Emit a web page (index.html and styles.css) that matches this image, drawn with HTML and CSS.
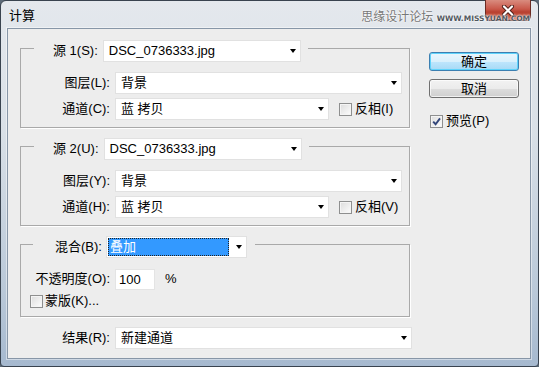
FILE: index.html
```html
<!DOCTYPE html>
<html lang="zh-CN">
<head>
    <meta charset="UTF-8">
    <title>计算</title>
    <link rel="stylesheet" href="styles.css">
</head>
<body>
    <div class="window">
        <div class="titlebar">
            <span class="title">计算</span>
            <span class="close">
                <svg width="16" height="11" viewBox="0 0 16 11"><path d="M4 1.5 L12 9.5 M12 1.5 L4 9.5" stroke="#4a1c16" stroke-width="4" stroke-linecap="round"/><path d="M4 1.5 L12 9.5 M12 1.5 L4 9.5" stroke="#fff" stroke-width="2.2" stroke-linecap="round"/></svg>
            </span>
            <span class="watermark">思缘设计论坛 <b>WWW.MISSYUAN.COM</b></span>
        </div>
        <div class="client">
            <div class="main">
                <fieldset class="group">
                    <legend class="legend">
                        <div class="head">
                            <span class="head-label">源 1(S):</span>
                            <div class="select select-src"><span>DSC_0736333.jpg</span><i class="arrow"></i></div>
                        </div>
                    </legend>
                    <div class="rows">
                        <div class="row">
                            <span class="lbl">图层(L):</span>
                            <div class="select select-wide"><span>背景</span><i class="arrow"></i></div>
                        </div>
                        <div class="row">
                            <span class="lbl">通道(C):</span>
                            <div class="select select-channel"><span>蓝 拷贝</span><i class="arrow"></i></div>
                            <span class="check"></span>
                            <span>反相(I)</span>
                        </div>
                    </div>
                </fieldset>

                <fieldset class="group">
                    <legend class="legend">
                        <div class="head">
                            <span class="head-label">源 2(U):</span>
                            <div class="select select-src"><span>DSC_0736333.jpg</span><i class="arrow"></i></div>
                        </div>
                    </legend>
                    <div class="rows">
                        <div class="row">
                            <span class="lbl">图层(Y):</span>
                            <div class="select select-wide"><span>背景</span><i class="arrow"></i></div>
                        </div>
                        <div class="row">
                            <span class="lbl">通道(H):</span>
                            <div class="select select-channel"><span>蓝 拷贝</span><i class="arrow"></i></div>
                            <span class="check"></span>
                            <span>反相(V)</span>
                        </div>
                    </div>
                </fieldset>

                <fieldset class="group">
                    <legend class="legend legend-blend">
                        <div class="head">
                            <span class="head-label">混合(B):</span>
                            <div class="select select-blend"><span class="picked">叠加</span><i class="arrow"></i></div>
                        </div>
                    </legend>
                    <div class="rows">
                        <div class="row">
                            <span class="lbl">不透明度(O):</span>
                            <div class="field">100</div>
                            <span class="unit">%</span>
                        </div>
                        <div class="row row-mask">
                            <span class="check"></span>
                            <span>蒙版(K)...</span>
                        </div>
                    </div>
                </fieldset>

                <div class="row result">
                    <span class="lbl">结果(R):</span>
                    <div class="select select-result"><span>新建通道</span><i class="arrow"></i></div>
                </div>
            </div>

            <div class="side">
                <button class="btn btn-default">确定</button>
                <button class="btn">取消</button>
                <div class="preview">
                    <span class="check">
                        <svg width="9" height="9" viewBox="0 0 9 9"><path d="M1.2 4.6 L3.6 7.2 L8 1.4" fill="none" stroke="#33467a" stroke-width="1.9"/></svg>
                    </span>
                    <span>预览(P)</span>
                </div>
            </div>
        </div>
    </div>
</body>
</html>
```

FILE: styles.css
```css
* {
    margin: 0;
    padding: 0;
    box-sizing: border-box;
}

body {
    width: 539px;
    height: 367px;
    overflow: hidden;
    background: #5d6b79;
    font-family: "Liberation Sans", "Noto Sans CJK SC", sans-serif;
    font-size: 13px;
    line-height: 16px;
    color: #000;
}

.window {
    height: 367px;
    display: flex;
    flex-direction: column;
    border: 1px solid #39434f;
    border-radius: 6px 6px 4px 4px;
    background: linear-gradient(180deg, #e4e8ed 0%, #d9e0e7 35%, #b9c8d8 80%, #a6b9cf 100%);
}

.titlebar {
    position: relative;
    height: 27px;
    flex: none;
    display: flex;
}

.title {
    padding: 7px 0 0 8px;
    font-size: 13px;
}

.close {
    margin: -1px 7px 0 auto;
    width: 46px;
    height: 21px;
    display: flex;
    justify-content: center;
    align-items: center;
    border: 1px solid #6a2b23;
    border-top: none;
    border-radius: 0 0 5px 5px;
    background: linear-gradient(180deg, #d98c7f 0%, #c9584a 45%, #b8402f 60%, #d26a52 100%);
}

/* site watermark stamped over the title bar */
.watermark {
    position: absolute;
    top: 8px;
    right: 8px;
    font-size: 12px;
    color: #777;
    text-shadow: 0 0 2px #fff, 0 0 2px #fff;
}

.watermark b {
    font-family: "DejaVu Sans", sans-serif;
    font-size: 7.5px;
    color: #505860;
}

.client {
    flex: 1;
    margin: 0 7px 7px 6px;
    border: 1px solid #8796a7;
    box-shadow: 0 0 0 1px rgba(255, 255, 255, 0.45);
    background: #ededed;
    display: flex;
    padding: 6px 0 0 12px;
}

.main {
    width: 390px;
    flex: none;
}

.group {
    border: 1px solid #a9a9a9;
    box-shadow: 1px 1px 0 #fff;
    padding: 0 0 7px 0;
    margin-bottom: 5px;
}

.legend {
    margin-left: 13px;
    padding: 5px 7px 0 19px;
}

.legend-blend {
    margin-left: 12px;
    padding: 5px 8px 0 22px;
}

.head {
    display: flex;
    align-items: center;
    gap: 5px;
}

.legend-blend .head {
    gap: 4px;
}

.rows {
    padding-top: 10px;
    display: flex;
    flex-direction: column;
    gap: 4px;
}

.row {
    display: flex;
    align-items: center;
    height: 22px;
}

.lbl {
    width: 89px;
    flex: none;
    text-align: right;
    margin-right: 5px;
    white-space: nowrap;
}

.select {
    height: 22px;
    flex: none;
    display: flex;
    align-items: center;
    justify-content: space-between;
    padding: 0 4px 0 5px;
    background: #fff;
    border: 1px solid #e1e1e1;
    white-space: nowrap;
}

.arrow {
    width: 0;
    height: 0;
    border-top: 4px solid #000;
    border-left: 3.5px solid transparent;
    border-right: 3.5px solid transparent;
}

.select-src {
    width: 198px;
}

.select-wide {
    width: 287px;
}

.select-channel {
    width: 214px;
}

.select-result {
    width: 297px;
}

.select-blend {
    width: 141px;
    padding: 1px 4px 1px 1px;
}

.picked {
    width: 121px;
    height: 18px;
    padding-left: 2px;
    background: #3399ff;
    color: #fff;
    outline: 1px dotted #222;
    outline-offset: -1px;
    line-height: 18px;
}

.check {
    width: 13px;
    height: 13px;
    flex: none;
    display: flex;
    justify-content: center;
    align-items: center;
    border: 1px solid #8e8f8f;
    background: linear-gradient(135deg, #dcdcdc, #fdfdfd);
    box-shadow: inset 0 0 0 1px #f4f4f4;
    margin: 0 3px 0 10px;
}

.field {
    width: 40px;
    height: 21px;
    flex: none;
    padding: 2px 0 0 3px;
    background: #fff;
    border: 1px solid #e4e4e4;
}

.unit {
    margin-left: 10px;
}

.row-mask {
    height: 16px;
    margin-top: -1px;
}

.row-mask .check {
    margin: 0 2px 0 9px;
}

.result {
    margin-top: 10px;
    padding-left: 1px;
}

.side {
    margin-left: 19px;
    width: 90px;
    flex: none;
    padding-top: 17px;
    display: flex;
    flex-direction: column;
}

.btn {
    height: 19px;
    font: inherit;
    line-height: 15px;
    color: #000;
    border: 1px solid #707070;
    border-radius: 3px;
    background: linear-gradient(180deg, #f2f2f2 0%, #ebebeb 50%, #dddddd 51%, #cfcfcf 100%);
    box-shadow: inset 0 0 0 1px rgba(255, 255, 255, 0.7);
}

.btn + .btn {
    margin-top: 8px;
}

.btn-default {
    border-color: #3c7fb1;
    background: linear-gradient(180deg, #eaf6fd 0%, #d9f0fc 50%, #bee6fd 51%, #a7d9f5 100%);
    box-shadow: inset 0 0 0 1px #5fd3fb;
}

.preview {
    margin-top: 16px;
    display: flex;
    align-items: center;
    height: 14px;
}

.preview .check {
    margin: 0 3px 0 1px;
}
```
